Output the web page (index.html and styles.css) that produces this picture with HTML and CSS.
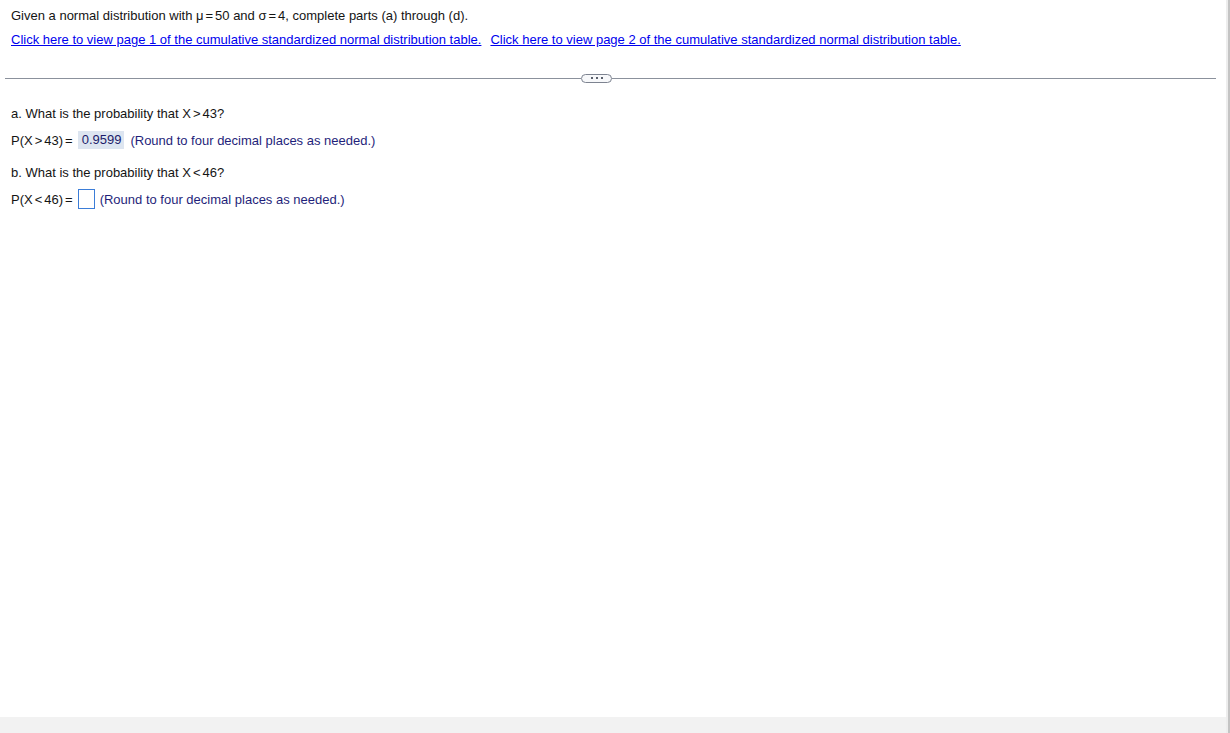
FILE: index.html
```html
<!DOCTYPE html>
<html>
<head>
<meta charset="utf-8">
<link rel="stylesheet" href="styles.css">
</head>
<body>
<div class="frame">
  <div class="page">
    <div class="content">
      <div class="header">
        <p class="prompt">Given a normal distribution with μ<span class="op">=</span>50 and σ<span class="op">=</span>4, complete parts (a) through (d).</p>
        <p class="links"><a href="#" class="link">Click here to view page 1 of the cumulative standardized normal distribution table.</a><a href="#" class="link">Click here to view page 2 of the cumulative standardized normal distribution table.</a></p>
      </div>
      <div class="divider">
        <span class="rule rule-left"></span>
        <span class="more"><i></i><i></i><i></i></span>
        <span class="rule"></span>
      </div>
      <div class="parts">
        <p class="q">a. What is the probability that X<span class="op">&gt;</span>43?</p>
        <p class="ans">P(X<span class="op">&gt;</span>43)<span class="op">=</span><span class="filled">0.9599</span><span class="hint hint-a">(Round to four decimal places as needed.)</span></p>
        <p class="q">b. What is the probability that X<span class="op">&lt;</span>46?</p>
        <p class="ans">P(X<span class="op">&lt;</span>46)<span class="op">=</span><span class="empty"></span><span class="hint">(Round to four decimal places as needed.)</span></p>
      </div>
    </div>
    <div class="footer"></div>
  </div>
  <div class="scroll"></div>
</div>
</body>
</html>
```
FILE: styles.css
```css
html, body {
  margin: 0;
  padding: 0;
  background: #ffffff;
}
body {
  font-family: "Liberation Sans", Arial, sans-serif;
  font-size: 13px;
  color: #141414;
}
.frame {
  display: flex;
  width: 1230px;
  height: 733px;
  overflow: hidden;
}
.page {
  flex: 1;
  display: flex;
  flex-direction: column;
}
.content {
  flex: 1;
  background: #fff;
}
.footer {
  height: 16px;
  background: #f2f2f2;
}
.scroll {
  width: 4px;
  border-left: 2px solid #ededed;
  background: #c4c4c4;
  box-sizing: border-box;
}
p { margin: 0; }
.op {
  margin: 0 2px;
}
.header {
  padding: 8px 0 0 11px;
}
.prompt {
  line-height: 16px;
}
.links {
  margin-top: 8px;
  line-height: 16px;
  display: flex;
  gap: 9px;
}
.link {
  color: #0000ee;
  text-decoration: underline;
}
.divider {
  display: flex;
  align-items: center;
  margin: 25px 10px 0 5px;
  height: 10px;
}
.rule {
  flex: 1;
  height: 1px;
  background: #8b919c;
}
.rule-left {
  flex: 0 0 576px;
}
.more {
  width: 29px;
  height: 7px;
  border: 1px solid #7d8390;
  border-radius: 5px;
  display: flex;
  justify-content: center;
  align-items: center;
  gap: 3px;
  background: #f7f8fa;
}
.more i {
  width: 2px;
  height: 2px;
  background: #5a606c;
}
.parts {
  padding: 23px 0 0 11px;
}
.q {
  line-height: 16px;
}
.ans {
  margin-top: 7px;
  height: 22px;
  display: flex;
  align-items: center;
}
.ans + .q {
  margin-top: 14px;
}
.filled {
  background: #dde5f0;
  padding: 0 3px 0 4px;
  color: #1b1b6a;
  line-height: 18px;
  margin-left: 3px;
}
.empty {
  width: 15px;
  height: 18px;
  border: 1px solid #3b7dd8;
  margin-left: 3px;
}
.hint {
  color: #1f1f7a;
  margin-left: 5px;
}
.hint-a {
  margin-left: 6px;
}
```
